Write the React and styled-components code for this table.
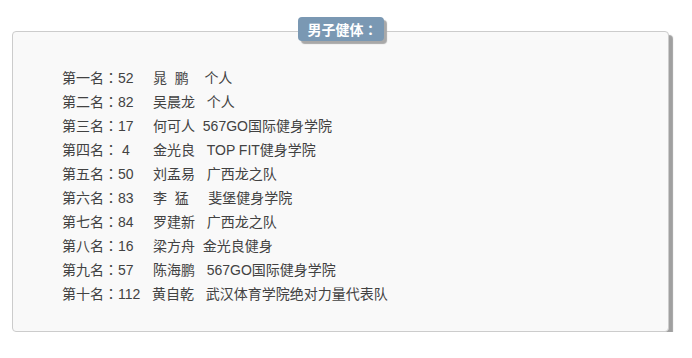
import styled, { createGlobalStyle } from "styled-components";

const GlobalStyle = createGlobalStyle`
  body {
    margin: 0;
    background: #ffffff;
    font-family: "Liberation Sans", "Noto Sans CJK SC", sans-serif;
  }
`;

const Page = styled.div`
  padding: 31px 0 0 12px;
`;

const Box = styled.div`
  width: 655px;
  height: 299px;
  box-sizing: content-box;
  border: 1px solid #cccccc;
  border-radius: 4px;
  background: #f9f9f9;
  box-shadow: 4px 4px 1px #a0a0a0;
`;

const Legend = styled.div`
  display: flex;
  justify-content: center;
  margin-top: -15px;
`;

const Badge = styled.div`
  height: 24px;
  line-height: 24px;
  padding: 0 6px 0 10px;
  border-radius: 4px;
  background: #7a98b3;
  color: #ffffff;
  font-size: 14px;
  font-weight: bold;
  box-shadow: 3px 3px 1px #a8a8a8;
`;

// centred full-width colon, as in the original font
const Colon = styled.span`
  font-family: "Noto Sans CJK TC", "Noto Sans CJK SC", sans-serif;
`;

const List = styled.ul`
  list-style: none;
  margin: 24px 0 0 0;
  padding: 0 0 0 49px;
`;

const Row = styled.li`
  height: 24px;
  line-height: 24px;
  font-size: 14px;
  color: #424242;
  white-space: pre;
`;

const rows = [
  ["第一名", "52", "     ", "晁  鹏", "    ", "个人"],
  ["第二名", "82", "     ", "吴晨龙", "   ", "个人"],
  ["第三名", "17", "     ", "何可人", "  ", "567GO国际健身学院"],
  ["第四名", " 4", "      ", "金光良", "   ", "TOP FIT健身学院"],
  ["第五名", "50", "     ", "刘孟易", "   ", "广西龙之队"],
  ["第六名", "83", "     ", "李  猛", "     ", "斐堡健身学院"],
  ["第七名", "84", "     ", "罗建新", "   ", "广西龙之队"],
  ["第八名", "16", "     ", "梁方舟", "  ", "金光良健身"],
  ["第九名", "57", "     ", "陈海鹏", "   ", "567GO国际健身学院"],
  ["第十名", "112", "   ", "黄自乾", "   ", "武汉体育学院绝对力量代表队"],
];

export default function App() {
  return (
    <Page>
      <GlobalStyle />
      <Box>
        <Legend>
          <Badge>
            男子健体<Colon>：</Colon>
          </Badge>
        </Legend>
        <List>
          {rows.map((r) => (
            <Row key={r[0]}>
              <span>
                {r[0]}
                <Colon>：</Colon>
                {r[1]}
              </span>
              {r[2]}
              <span>{r[3]}</span>
              {r[4]}
              <span>{r[5]}</span>
            </Row>
          ))}
        </List>
      </Box>
    </Page>
  );
}
